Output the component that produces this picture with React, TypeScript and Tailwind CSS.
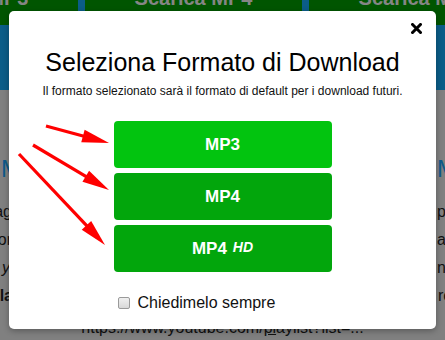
import React from "react";

function Arrow({ x1, y1, x2, y2 }: { x1: number; y1: number; x2: number; y2: number }) {
  const dx = x2 - x1;
  const dy = y2 - y1;
  const len = Math.hypot(dx, dy);
  const ux = dx / len;
  const uy = dy / len;
  const hl = 27;
  const hw = 6.5;
  const bx = x2 - ux * hl;
  const by = y2 - uy * hl;
  const px = -uy * hw;
  const py = ux * hw;
  return (
    <g>
      <line x1={x1} y1={y1} x2={bx + ux * 2} y2={by + uy * 2} stroke="#ff0000" strokeWidth={3.2} />
      <polygon points={`${x2},${y2} ${bx + px},${by + py} ${bx - px},${by - py}`} fill="#ff0000" />
    </g>
  );
}

export default function App() {
  return (
    <div className="relative w-[445px] h-[340px] overflow-hidden bg-[#808080] font-['Liberation_Sans',Arial,sans-serif]">
      {/* background page (dimmed) */}
      <div className="h-[90px] bg-[#0b5d88]">
        <div className="flex gap-[7px] -ml-[139px]">
          {["Scarica MP3", "Scarica MP4", "Scarica MP4"].map((t, i) => (
            <div key={i} className="w-[217px] h-[25px] shrink-0 overflow-hidden bg-[#005500] text-center">
              <div className="-mt-[14px] leading-[25px] text-[20px] font-bold text-[#858585] whitespace-nowrap">{t}</div>
            </div>
          ))}
        </div>
      </div>
      <div className="flex flex-col text-[16px] text-[#111]">
        <div className="mt-[65px] flex justify-between leading-[28px] text-[24px] text-[#0e5a8a]">
          <span className="pl-[1px]">M</span>
          <span className="w-[8px] whitespace-nowrap">Mu</span>
        </div>
        <div className="mt-[15px] flex justify-between leading-[28px]">
          <span className="w-[12px] flex justify-end whitespace-nowrap">mag</span>
          <span className="w-[8px] whitespace-nowrap">pi</span>
        </div>
        <div className="flex justify-between leading-[28px]">
          <span className="w-[12px] flex justify-end whitespace-nowrap">or</span>
          <span className="w-[8px] whitespace-nowrap">al</span>
        </div>
        <div className="flex justify-between leading-[28px]">
          <span className="w-[10px] flex justify-end whitespace-nowrap italic">y</span>
          <span className="w-[8px] whitespace-nowrap">ne</span>
        </div>
        <div className="flex justify-between leading-[28px]">
          <span className="w-[13px] flex justify-end whitespace-nowrap font-bold">la</span>
          <span className="w-[7px] whitespace-nowrap">re</span>
        </div>
        <div className="mt-[4px] leading-[28px] text-center whitespace-nowrap">
          https://www.youtube.com/<span className="underline">pl</span>aylist?list=...
        </div>
      </div>

      {/* modal */}
      <div className="absolute left-[9px] top-[11px] w-[427px] h-[318px] rounded-[5px] bg-white shadow-[0_2px_6px_rgba(0,0,0,0.3)] flex flex-col items-center">
        <button className="absolute top-[12px] right-[14px] w-[11px] h-[11px]">
          <svg width="11" height="11" viewBox="0 0 11 11">
            <path d="M1.5 1.5 L9.5 9.5 M9.5 1.5 L1.5 9.5" stroke="#000" strokeWidth="3" strokeLinecap="square" fill="none" />
          </svg>
        </button>
        <div className="mt-[37px] text-[25px] leading-[29px] text-black whitespace-nowrap">Seleziona Formato di Download</div>
        <div className="mt-[7px] text-[12px] leading-[14px] text-[#111] whitespace-nowrap">
          Il formato selezionato sarà il formato di default per i download futuri.
        </div>
        <div className="mt-[23px] flex flex-col gap-[5px] w-[218px]">
          <div className="h-[47px] rounded-[4px] bg-[#02c40f] flex items-center justify-center text-white font-bold text-[17px]">
            MP3
          </div>
          <div className="h-[47px] rounded-[4px] bg-[#02a60c] flex items-center justify-center text-white font-bold text-[17px]">
            MP4
          </div>
          <div className="h-[47px] rounded-[4px] bg-[#02a60c] flex items-center justify-center text-white font-bold text-[17px]">
            <span>MP4</span>
            <span className="ml-[6px] text-[14px] italic -translate-y-[1px]">HD</span>
          </div>
        </div>
        <div className="mt-[22px] w-[218px] pl-[4px] flex items-center h-[18px]">
          <div className="w-[12px] h-[12px] rounded-[2px] border border-[#9a9a9a] bg-gradient-to-b from-[#f0f0f0] to-[#d8d8d8]" />
          <span className="ml-[8px] text-[16px] leading-[18px] text-[#111]">Chiedimelo sempre</span>
        </div>
      </div>

      {/* arrows */}
      <svg className="absolute inset-0 pointer-events-none" width="445" height="340" viewBox="0 0 445 340">
        <Arrow x1={46} y1={126} x2={109} y2={143} />
        <Arrow x1={33} y1={145} x2={109} y2={190} />
        <Arrow x1={19} y1={154} x2={105} y2={245} />
      </svg>
    </div>
  );
}
